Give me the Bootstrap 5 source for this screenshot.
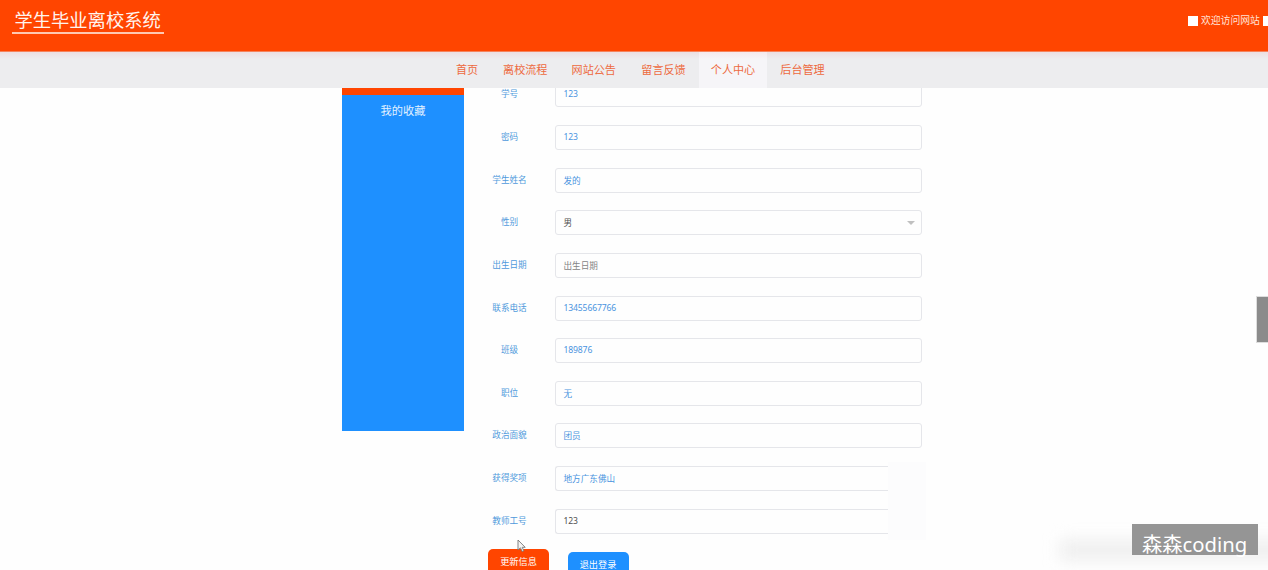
<!DOCTYPE html>
<html lang="zh-CN">
<head>
<meta charset="utf-8">
<title>学生毕业离校系统</title>
<meta name="viewport" content="width=device-width, initial-scale=1">
<link href="https://cdn.jsdelivr.net/npm/bootstrap@5.3.0/dist/css/bootstrap.min.css" rel="stylesheet">
<style>
body{height:570px;background:#fefefe;font-family:"Noto Sans CJK SC",sans-serif;font-size:8.6px;line-height:1}
.top-bar{height:52px;background:#ff4500;border-bottom:1px solid #f5835c;padding-left:12px}
.site-name{width:152px;height:34px;border-bottom:2px solid #ffc8b2;font-size:18.3px;line-height:18px;padding:10px 0 0 2.5px;color:#fff4ee}
.welcome{width:80px;height:10px;margin-top:16px;font-size:9.8px;gap:3px;color:#ffe3d8}
.box{width:10px;height:10px;background:#fff;flex:none}
.menu-bar{height:36px;padding-left:443px;background:linear-gradient(#ecdfe2,#ededef 7px)}
.menu-bar a{font-size:11.1px;line-height:35px;width:68.5px;color:#ed6a40;text-align:center;text-decoration:none;flex:none}
.menu-bar a.active{width:68px;background:linear-gradient(#f5e9ed,#f6f5f8 7px)}
.page{height:482px;padding-left:342px}
.side{width:122px;height:342.5px;background:#1e90ff;color:#e3f2ff;font-size:11.2px}
.side-mark{height:7px;background:#ff4500}
.fields{width:458px;margin-top:-5.7px}
.field{height:42.65px}
.field label{width:91px;height:25px;line-height:23.5px;color:#4f9adc;text-align:center;flex:none}
.field .form-control{width:366.5px;height:25px;min-height:0;padding:0 7.5px;font-size:8.6px;line-height:23px;border:1px solid #e5e6ea;border-radius:3px;background:#fefefe;color:#4a94de}
.field .num{font-family:"Noto Sans",sans-serif;letter-spacing:-.14px}
.field .plain{color:#505050}
.field .hint{color:#858585}
.field .cut{width:333px;border-right:0;border-top-right-radius:0;border-bottom-right-radius:0}
.caret{border:4px solid transparent;border-top:4px solid #c0c0c0;border-bottom:0;margin-right:-2px}
.act{width:61px;height:25px;padding:0;border:0;border-radius:5px;font-size:9.2px;line-height:25px;color:#fff}
.act:hover{color:#fff}
.actions{padding-left:24px;gap:18.5px;margin-top:-2.4px}
.drawer{right:0;top:296px;width:12.5px;height:47px;background:#8b8b8b;border:solid #ddd;border-width:1px 0 1px 1px}
.haze{left:1060px;top:540px;width:230px;height:20px;background:#eee;filter:blur(8px)}
.smudge{left:888px;top:462px;width:38px;height:78px;background:#fcfcfd}
.sign{left:1132px;top:524px;width:126px;height:31px;background:#959595;color:#fff;font:20.3px/41px "Noto Sans","Noto Sans CJK SC",sans-serif;padding-left:10px;white-space:nowrap}
.pointer{left:517px;top:539px}
</style>
</head>
<body class="position-relative overflow-hidden">
<header class="top-bar d-flex justify-content-between">
  <div class="site-name text-nowrap">学生毕业离校系统</div>
  <div class="welcome d-flex align-items-center text-nowrap"><span class="box"></span><span>欢迎访问网站</span><span class="box"></span></div>
</header>
<nav class="menu-bar d-flex">
  <a href="#" style="width:48px">首页</a><a href="#">离校流程</a><a href="#">网站公告</a><a href="#" style="width:71px">留言反馈</a><a href="#" class="active">个人中心</a><a href="#" style="width:71px">后台管理</a>
</nav>
<main class="page d-flex align-items-start overflow-hidden">
  <aside class="side text-center"><div class="side-mark"></div><div style="padding-top:9.5px">我的收藏</div></aside>
  <form class="fields">
    <div class="field d-flex"><label>学号</label><div class="form-control num">123</div></div>
    <div class="field d-flex"><label>密码</label><div class="form-control num">123</div></div>
    <div class="field d-flex"><label>学生姓名</label><div class="form-control">发的</div></div>
    <div class="field d-flex"><label>性别</label><div class="form-control plain d-flex justify-content-between align-items-center"><span>男</span><i class="caret"></i></div></div>
    <div class="field d-flex"><label>出生日期</label><div class="form-control hint">出生日期</div></div>
    <div class="field d-flex"><label>联系电话</label><div class="form-control num">13455667766</div></div>
    <div class="field d-flex"><label>班级</label><div class="form-control num">189876</div></div>
    <div class="field d-flex"><label>职位</label><div class="form-control">无</div></div>
    <div class="field d-flex"><label>政治面貌</label><div class="form-control">团员</div></div>
    <div class="field d-flex"><label>获得奖项</label><div class="form-control cut">地方广东佛山</div></div>
    <div class="field d-flex"><label>教师工号</label><div class="form-control num plain cut">123</div></div>
    <div class="actions d-flex">
      <button type="button" class="btn act" style="background:#ff4500">更新信息</button>
      <button type="button" class="btn act" style="background:#1e90ff;margin-top:3px">退出登录</button>
    </div>
  </form>
</main>
<div class="smudge position-absolute"></div>
<div class="drawer position-absolute"></div>
<div class="haze position-absolute"></div>
<div class="sign position-absolute">森森coding</div>
<svg class="pointer position-absolute" width="10" height="14" viewBox="0 0 10 14"><path d="M1 1v10l2.4-2.2 1.8 3.7 1.6-.8-1.6-3.4h3z" fill="#f4f4f4" stroke="#777" stroke-width=".9"/></svg>
<script src="https://cdn.jsdelivr.net/npm/bootstrap@5.3.0/dist/js/bootstrap.bundle.min.js"></script>
</body>
</html>
